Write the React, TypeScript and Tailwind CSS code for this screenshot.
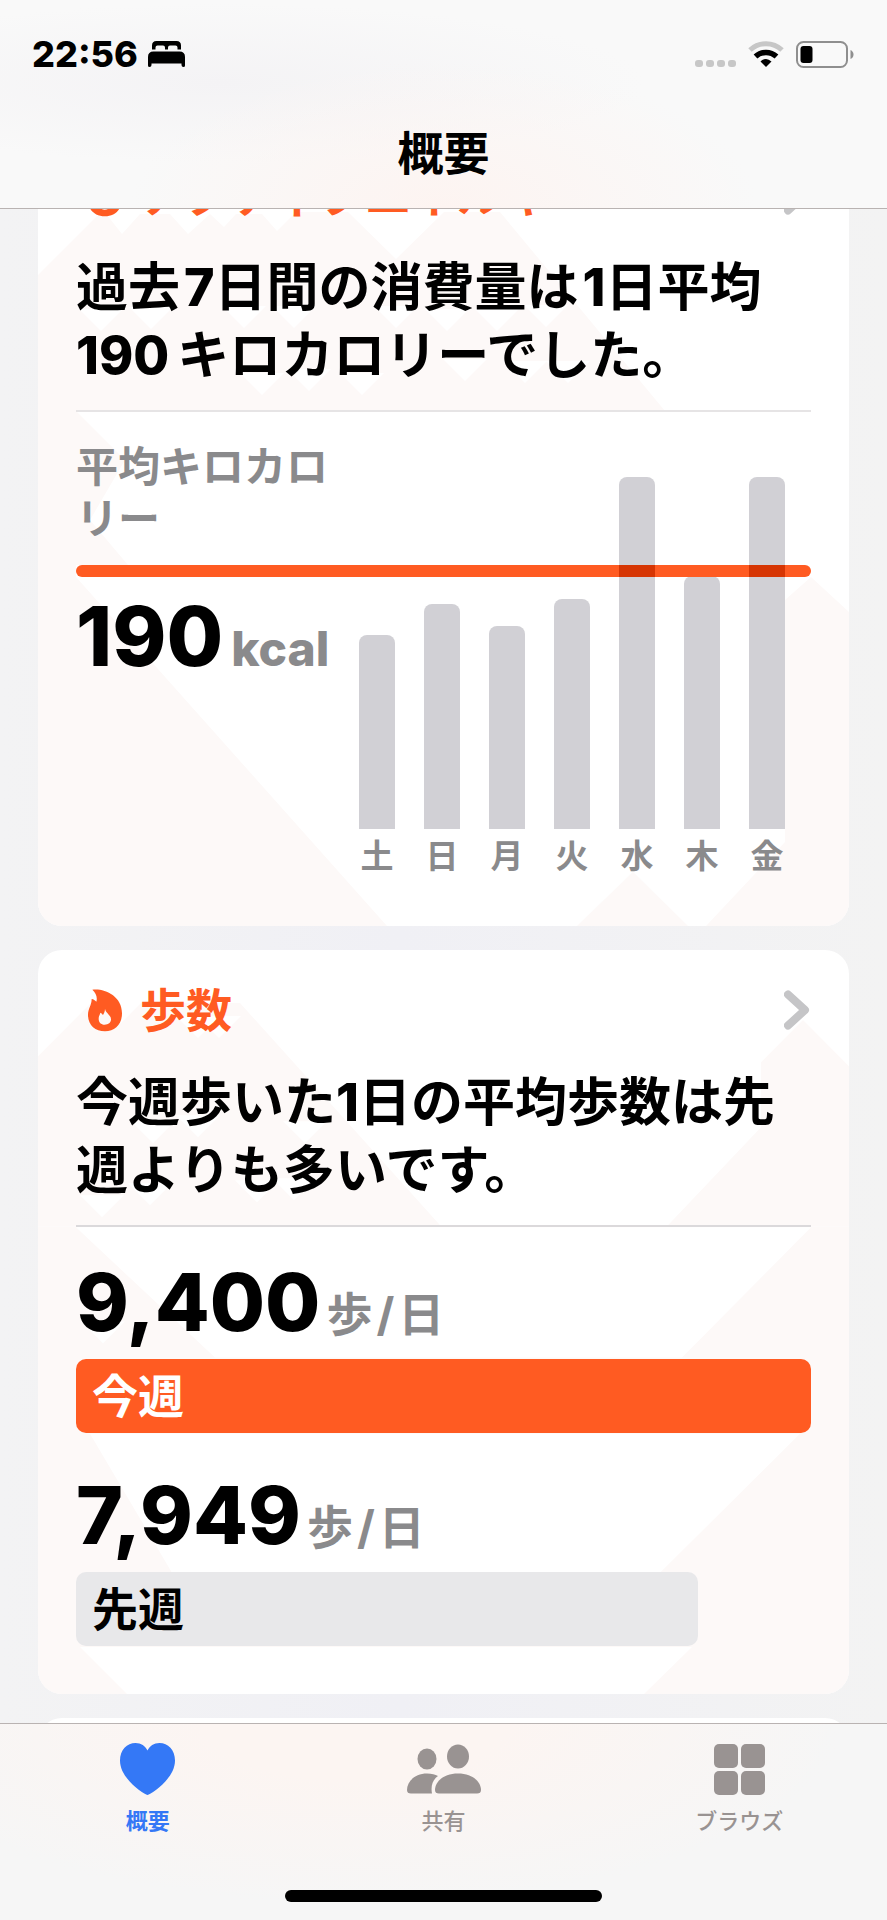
import type { ReactNode } from 'react'

const DAYS = [
  { label: '土', height: 194 },
  { label: '日', height: 225 },
  { label: '月', height: 203 },
  { label: '火', height: 230 },
  { label: '水', height: 352, over: true },
  { label: '木', height: 253 },
  { label: '金', height: 352, over: true },
]

const WEEKS = [
  { label: '今週', value: 9400, className: 'bg-[#ff5b22] text-white' },
  { label: '先週', value: 7949, className: 'bg-[#e8e8ea] text-black' },
]

const maxSteps = Math.max(...WEEKS.map((w) => w.value))

function FlameIcon() {
  return (
    <svg width="34" height="43" viewBox="27 26 102 127" fill="#ff5b22" fillRule="evenodd" aria-hidden="true">
      <path d="M40 27C74 22 129 44 129 98C129 132 107 152 78 152C48 152 27 133 27 103C27 84 38 74 38 55C44 56 48 59 52 63C56 50 51 37 40 27ZM78 84C80 98 96 102 96 116C96 126 88 132 77 132C66 132 59 125 59 114C59 106 63 101 64 96C68 98 70 100 72 103C76 97 78 91 78 84Z" />
    </svg>
  )
}

function BedIcon() {
  return (
    <svg width="37" height="26" viewBox="0 0 37 26" aria-hidden="true">
      <path
        fillRule="evenodd"
        d="M4 8.5V4.5Q4 0 8.500 0H28.500Q33 0 33 4.500V8.500H29.500V6.500Q29.500 4.500 27.500 4.500H22Q20 4.500 20 6.500V8.500H17V6.500Q17 4.500 15 4.500H9.500Q7.500 4.500 7.500 6.500V8.500Z"
      />
      <path d="M0 16Q0 10.500 5.500 10.500H31.500Q37 10.500 37 16V24.500Q37 26 35.500 26Q33.500 26 33.500 24V22.500H3.500V24Q3.500 26 1.500 26Q0 26 0 24.500Z" />
    </svg>
  )
}

function StatusIcons() {
  return (
    <div className="flex items-center">
      <svg width="41" height="26" viewBox="0 0 41 26" fill="#c7c7c7" aria-hidden="true">
        {[0, 11, 22, 33].map((x) => (
          <rect key={x} x={x} y="19" width="8" height="7" rx="3" />
        ))}
      </svg>
      <svg width="36" height="26" viewBox="0 0 36 26" fill="none" className="ml-3" aria-hidden="true">
        <path d="M2 9C11 .5 25 .5 34 9" stroke="#c7c7c7" strokeWidth="5" />
        <path d="M7.500 15.500C13.500 10 22.500 10 28.500 15.500" stroke="#000" strokeWidth="5.500" />
        <path d="M18 26L12.500 20.500Q18 15.500 23.500 20.500Z" fill="#000" />
      </svg>
      <svg width="58" height="27" viewBox="0 0 58 27" fill="none" className="ml-3" aria-hidden="true">
        <rect x="1" y="1" width="50" height="25" rx="6.500" stroke="#8f8f8f" strokeWidth="2" />
        <rect x="4.500" y="5" width="12" height="17" rx="3" fill="#000" />
        <path d="M54.500 9Q57.500 10.500 57.500 13.500T54.500 18Z" fill="#8f8f8f" />
      </svg>
    </div>
  )
}

function Card({ children, pattern, className }: { children: ReactNode; pattern: ReactNode; className: string }) {
  return (
    <section className={`relative isolate overflow-hidden rounded-3xl bg-white px-[38px] pt-[37px] ${className}`}>
      {pattern}
      {children}
    </section>
  )
}

function CardTitle({ children }: { children: ReactNode }) {
  return (
    <a href="#" className="flex h-[46px] items-center pl-3 text-[46px] leading-[46px] font-bold text-[#ff5b22]">
      <FlameIcon />
      <span className="ml-[18px]">{children}</span>
      <svg width="27" height="40" viewBox="0 0 27 40" fill="none" className="ml-auto" aria-hidden="true">
        <path d="M4 4.500L21 20L4 35.500" stroke="#c5c5c7" strokeWidth="8" strokeLinecap="round" strokeLinejoin="round" />
      </svg>
    </a>
  )
}

// Small white triangles that hang below the text lines
function Notches({ tips }: { tips: number[][] }) {
  return (
    <>
      {tips.map(([x, y]) => (
        <path key={`${x}-${y}`} d={`M${x} ${y}l-22 -22h44z`} fill="#fff" />
      ))}
    </>
  )
}

function EnergyPattern() {
  return (
    <svg viewBox="38 135 811 791" preserveAspectRatio="none" className="absolute inset-0 -z-10 h-full w-full" fill="#fdf9f8" aria-hidden="true">
      <path d="M38 275L103 210L122 234L140 214H170L188 234L210 214L224 227L236 214H262L277 231L296 212H348L396 259L444 212H500L665 411H76L125 460L90 520L128 565H76V577L387 926H38Z" />
      <path d="M811 577L849 612V926H706L785 842V600Z" />
      <path d="M633 872L688 926H577Z" />
      <Notches tips={[[101, 331], [151, 329], [244, 328], [294, 328], [396, 328], [447, 331], [497, 331], [546, 327]]} />
      <Notches tips={[[262, 395], [309, 391], [362, 395], [465, 381], [525, 383], [568, 383]]} />
    </svg>
  )
}

function StepsPattern() {
  return (
    <svg viewBox="38 950 811 743" preserveAspectRatio="none" className="absolute inset-0 -z-10 h-full w-full" fill="#fdf9f8" aria-hidden="true">
      <path d="M38 1056L94 1000L120 1024L141 1003H240L441 1226H38Z" />
      <path d="M803 1020L849 1066V1226H667L761 1127V1062Z" />
      <path d="M38 1226H849V1693H38Z" />
      <path d="M76 1227H811L682 1357H215ZM90 1433H800L660 1572H172ZM80 1646H692L644 1693H127Z" fill="#fff" />
      <Notches tips={[[198, 1038], [219, 1038], [153, 1143], [198, 1137], [305, 1143]]} />
      <Notches tips={[[102, 1217], [150, 1205], [257, 1202], [294, 1200], [103, 1343]]} />
    </svg>
  )
}

function Tab({ label, active, children }: { label: string; active?: boolean; children: ReactNode }) {
  return (
    <a
      href="#"
      aria-current={active ? 'page' : undefined}
      className={`flex flex-1 flex-col items-center gap-3 text-[22px] leading-7 ${
        active ? 'font-bold text-[#3478f6]' : 'font-medium text-[#999392]'
      }`}
    >
      <span className="flex h-[52px] items-center">{children}</span>
      {label}
    </a>
  )
}

export default function App() {
  return (
    <div
      lang="ja"
      className="flex min-h-screen flex-col bg-[#f3f3f4] font-['Inter','Noto_Sans_CJK_JP',sans-serif] text-black"
    >
      <header className="border-b border-[#b9b3b2] bg-[#f9f9f9] bg-[radial-gradient(ellipse_at_50%_100%,#fdf4f1_0%,transparent_50%),radial-gradient(ellipse_at_25%_40%,#f4f3f5_0%,transparent_45%)] pt-9">
        <div className="flex h-9 items-center justify-between pr-[33px] pl-8">
          <div className="flex items-center gap-[10px] text-[36px] leading-9 font-extrabold">
            <time>22:56</time>
            <BedIcon />
          </div>
          <StatusIcons />
        </div>
        <h1 className="mt-[53px] pb-[27px] text-center text-[46px] leading-[56px] font-bold">概要</h1>
      </header>

      <main className="flex-1 overflow-hidden bg-[linear-gradient(90deg,#f3f3f4,#f0f0f5_45%,#f3f3f3)] px-[38px]">
        {/* Active energy */}
        <Card className="-mt-[74px] pb-[53px]" pattern={<EnergyPattern />}>
          <CardTitle>アクティブエネルギー</CardTitle>
          <p className="mt-9 text-[52px] leading-[68px] font-bold">
            過去<span className="ml-1 font-extrabold">7</span>日間の消費量は
            <span className="ml-1 font-extrabold">1</span>日平均
            <span className="mr-2 font-extrabold">190</span>キロカロリーでした。
          </p>
          <hr className="mt-5 border-t-2 border-[#e6e4e5]" />
          <div className="relative mt-[29px] flex items-end">
            <div className="flex-1 self-start">
              <p className="text-[42px] leading-[52px] font-bold text-[#8a8a8c]">平均キロカロリー</p>
              <p className="mt-[51px] flex items-baseline gap-2 font-extrabold whitespace-nowrap">
                <span className="text-[82px] leading-[82px]">190</span>
                <span className="text-[48px] leading-[48px] text-[#8a8a8c]">kcal</span>
              </p>
            </div>
            <div className="absolute inset-x-0 top-[124px] h-3 rounded-full bg-[#ff5b22]" />
            <ul className="flex h-[432px] items-end gap-[29px] pr-[26px]">
              {DAYS.map((day) => (
                <li key={day.label} className="flex w-9 flex-col items-center gap-[10px]">
                  <div
                    className={`relative w-full rounded-t-lg bg-[#d1d0d5] ${day.over ? '' : '-z-10'}`}
                    style={{ height: day.height }}
                  >
                    {day.over && <div className="absolute inset-x-0 bottom-[252px] h-3 bg-[#d63503]" />}
                  </div>
                  <span className="text-[33px] leading-[34px] font-bold text-[#8a8a8c]">{day.label}</span>
                </li>
              ))}
            </ul>
          </div>
        </Card>

        {/* Steps */}
        <Card className="mt-6 pb-12" pattern={<StepsPattern />}>
          <CardTitle>歩数</CardTitle>
          <p className="mt-9 text-[52px] leading-[68px] font-bold">
            今週歩いた<span className="font-extrabold">1</span>日の平均歩数は先週よりも多いです。
          </p>
          <hr className="mt-5 border-t-2 border-[#dbd9db]" />
          <div className="mt-[34px] flex flex-col gap-[41px]">
            {WEEKS.map((week) => (
              <div key={week.label}>
                <p className="flex items-baseline gap-[6px] font-bold">
                  <span className="text-[80px] leading-[82px] font-extrabold">{week.value.toLocaleString('en-US')}</span>
                  <span className="text-[46px] leading-[46px] text-[#8a8a8c]">
                    歩<span className="mx-1">/</span>日
                  </span>
                </p>
                <div
                  className={`mt-4 flex h-[74px] items-center rounded-[10px] pl-4 text-[46px] leading-[46px] font-bold ${week.className}`}
                  style={{ width: `${(week.value / maxSteps) * 100}%` }}
                >
                  {week.label}
                </div>
              </div>
            ))}
          </div>
        </Card>

        <div className="mt-6 -mb-[75px] h-20 rounded-3xl bg-white" />
      </main>

      <nav className="relative border-t border-[#b9b3b2] bg-[#f6f6f6] bg-[radial-gradient(ellipse_at_40%_0%,#fcf5f2_20%,transparent_65%)] pt-[19px] pb-[19px]">
        <div className="flex">
          <Tab label="概要" active>
            <svg width="55" height="52" viewBox="0 0 55 52" fill="currentColor" aria-hidden="true">
              <path d="M27.500 52C24 51 0 36 0 17.500C0 7 7 0 15.500 0C21 0 25.500 3 27.500 7.500C29.500 3 34 0 39.500 0C48 0 55 7 55 17.500C55 36 31 51 27.500 52Z" />
            </svg>
          </Tab>
          <Tab label="共有">
            <svg width="74" height="50" viewBox="0 0 74 49" fill="currentColor" aria-hidden="true">
              <ellipse cx="51" cy="12" rx="11" ry="12" />
              <ellipse cx="20" cy="14.500" rx="9.500" ry="10.500" />
              <path d="M28 45.500C28 37 37 29 51 29C65 29 74 37 74 45.500Q74 49 70 49H32Q28 49 28 45.500Z" />
              <path d="M0 45.500C0 37 8 29 20 29C25 29 28 30 31 31.500C26 35 23.500 41 25 49H4Q0 49 0 45.500Z" />
            </svg>
          </Tab>
          <Tab label="ブラウズ">
            <svg width="51" height="51" viewBox="0 0 51 51" fill="currentColor" aria-hidden="true">
              <rect width="24" height="24" rx="5" />
              <rect x="27" width="24" height="24" rx="5" />
              <rect y="27" width="24" height="24" rx="5" />
              <rect x="27" y="27" width="24" height="24" rx="5" />
            </svg>
          </Tab>
        </div>
        <div className="mx-auto mt-[55px] h-3 w-[317px] rounded-full bg-black" />
      </nav>
    </div>
  )
}
